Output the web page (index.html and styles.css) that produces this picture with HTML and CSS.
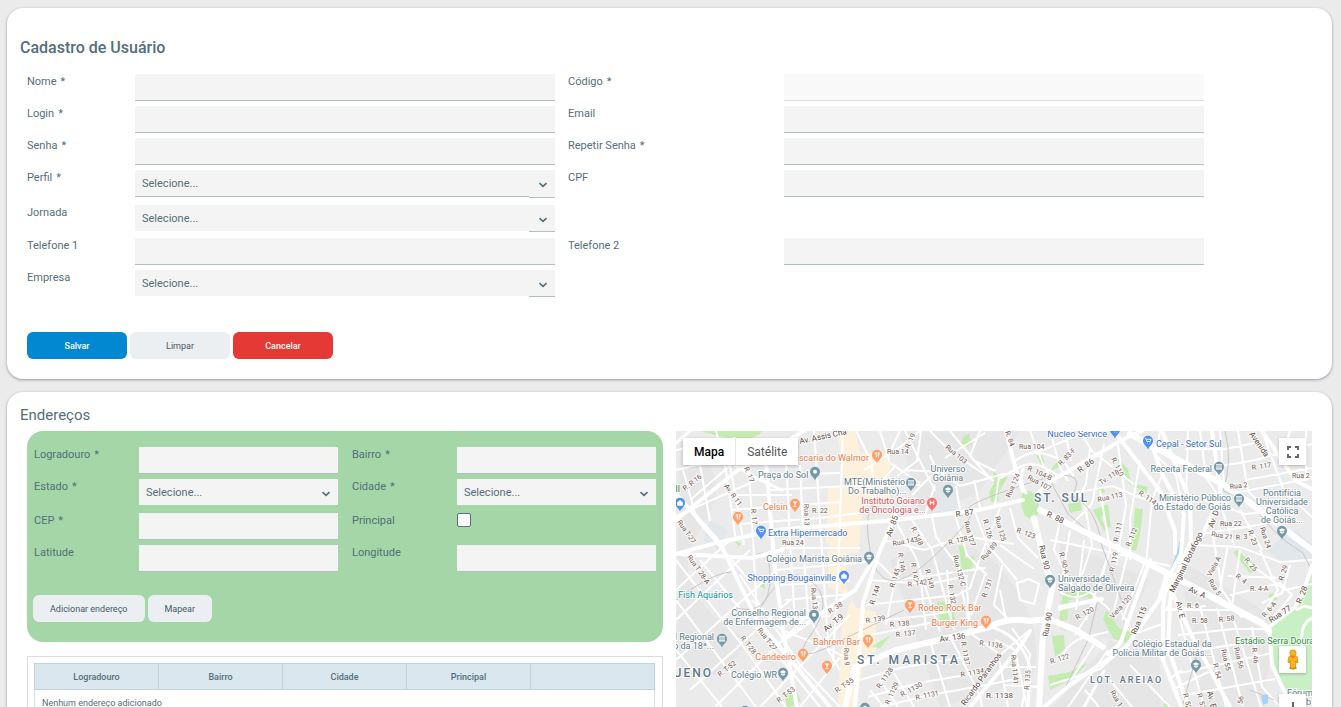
FILE: index.html
```html
<!DOCTYPE html>
<html lang="pt-BR">
<head>
<meta charset="utf-8">
<title>Cadastro de Usuário</title>
<link rel="stylesheet" href="styles.css">
</head>
<body>
<svg class="defs" aria-hidden="true">
  <symbol id="chevron" viewBox="0 0 10 6"><path d="M1.5 1.2L5 4.4L8.5 1.2" fill="none" stroke="#546e7a" stroke-width="1.6"/></symbol>
</svg>
<main class="page">
  <form class="card user-card">
    <h1 class="title">Cadastro de Usuário</h1>
    <div class="user-grid">
      <label class="first" for="nome">Nome<span class="req">*</span></label><input class="field main" id="nome" type="text">
      <label class="second" for="codigo">Código<span class="req">*</span></label><input class="field side" id="codigo" type="text" disabled>
      <label class="first" for="login">Login<span class="req">*</span></label><input class="field main" id="login" type="text">
      <label class="second" for="email">Email</label><input class="field side" id="email" type="text">
      <label class="first" for="senha">Senha<span class="req">*</span></label><input class="field main" id="senha" type="password">
      <label class="second" for="senha2">Repetir Senha<span class="req">*</span></label><input class="field side" id="senha2" type="password">
      <label class="first" for="perfil">Perfil<span class="req">*</span></label>
      <div class="picker main lined"><select id="perfil"><option>Selecione...</option></select><span class="arrow"><svg><use href="#chevron"/></svg></span></div>
      <label class="second" for="cpf">CPF</label><input class="field side" id="cpf" type="text">
      <label class="first" for="jornada">Jornada</label>
      <div class="picker main"><select id="jornada"><option>Selecione...</option></select><span class="arrow"><svg><use href="#chevron"/></svg></span></div>
      <label class="first" for="tel1">Telefone 1</label><input class="field main" id="tel1" type="text">
      <label class="second" for="tel2">Telefone 2</label><input class="field side" id="tel2" type="text">
      <label class="first" for="empresa">Empresa</label>
      <div class="picker main"><select id="empresa"><option>Selecione...</option></select><span class="arrow"><svg><use href="#chevron"/></svg></span></div>
    </div>
    <div class="actions">
      <button class="btn wide primary" type="button">Salvar</button>
      <button class="btn wide" type="button">Limpar</button>
      <button class="btn wide danger" type="button">Cancelar</button>
    </div>
  </form>

  <section class="card address-card">
    <h2 class="subtitle">Endereços</h2>
    <div class="columns">
      <div class="left">
        <form class="address-panel">
          <div class="address-grid">
            <label class="first" for="logradouro">Logradouro<span class="req">*</span></label><input class="field" id="logradouro" type="text">
            <label class="second" for="bairro">Bairro<span class="req">*</span></label><input class="field" id="bairro" type="text">
            <label class="first" for="estado">Estado<span class="req">*</span></label>
            <div class="picker"><select id="estado"><option>Selecione...</option></select><span class="arrow"><svg><use href="#chevron"/></svg></span></div>
            <label class="second" for="cidade">Cidade<span class="req">*</span></label>
            <div class="picker"><select id="cidade"><option>Selecione...</option></select><span class="arrow"><svg><use href="#chevron"/></svg></span></div>
            <label class="first" for="cep">CEP<span class="req">*</span></label><input class="field" id="cep" type="text">
            <label class="second" for="principal">Principal</label><input class="check" id="principal" type="checkbox">
            <label class="first" for="latitude">Latitude</label><input class="field" id="latitude" type="text">
            <label class="second" for="longitude">Longitude</label><input class="field" id="longitude" type="text">
          </div>
          <div class="actions address-actions">
            <button class="btn" type="button">Adicionar endereço</button>
            <button class="btn" type="button">Mapear</button>
          </div>
        </form>
        <div class="table-box">
          <table>
            <thead><tr><th>Logradouro</th><th>Bairro</th><th>Cidade</th><th>Principal</th><th></th></tr></thead>
            <tbody><tr><td colspan="5">Nenhum endereço adicionado</td></tr></tbody>
          </table>
        </div>
      </div>

      <div class="map">
        <svg class="map-canvas" viewBox="676 431 636 300" preserveAspectRatio="xMinYMin slice" role="img" aria-label="Mapa de Goiânia">
          <defs>
            <symbol id="pin" viewBox="0 0 12 15" overflow="visible"><path d="M6 14.5C5.4 11.500 1 9.800 1 5.700A5 5 0 0 1 11 5.700C11 9.800 6.600 11.500 6 14.500Z"/></symbol>
            <symbol id="fork" viewBox="0 0 12 15"><path d="M4.200 3v2.500M5.300 3v5.500M7.300 8.500V3.200M8 3.200v2.600" stroke="#fff" stroke-width=".9"/></symbol>
            <symbol id="glass" viewBox="0 0 12 15"><path d="M3.500 3.500h5L6.400 6v2h1.400v.8H4.200V8h1.400V6Z" fill="#fff"/></symbol>
            <symbol id="cart" viewBox="0 0 12 15"><path d="M3 3.500h1l1 3h3.200l.8-2.200H5M5.200 8.200h.6M7.600 8.200h.6" fill="none" stroke="#fff" stroke-width=".9"/></symbol>
            <symbol id="cap" viewBox="0 0 12 15"><path d="M2.600 5L6 3.200L9.400 5L6 6.800ZM4 6.300L6 7.400L8 6.300V7.700L6 8.700L4 7.700Z" fill="#fff"/></symbol>
            <symbol id="civic" viewBox="0 0 12 15"><path d="M3 3.200h6v1.200H3ZM3.500 5h1v2.500h-1ZM5.500 5h1v2.500h-1ZM7.500 5h1v2.500h-1ZM3 7.500h6v1H3Z" fill="#fff"/></symbol>
            <symbol id="dot" viewBox="0 0 12 15"><circle cx="6" cy="5.700" r="2" fill="#fff"/></symbol>
            <symbol id="bag" viewBox="0 0 12 15"><path d="M3.500 5h5v3.500h-5ZM4.700 5a1.300 1.500 0 0 1 2.600 0" fill="#fff" stroke="#fff" stroke-width=".6"/></symbol>
          </defs>
          <path class="land" d="M676 431h636v300H676Z"/>
          <g class="shade">
            <path d="M680 440q60 30 20 90t50 110q-40 60-74 20ZM900 431l120 0-40 60-60 30ZM890 560q80-40 120 20t20 100l-90 27ZM1060 540l90 40-30 60-60-10ZM1180 560l100 60-20 87h-60ZM1110 640l50 20v50h-110Z"/>
          </g>
          <g class="commercial">
            <path d="M837 431h18l5 22h30v50h-26l-6 50h-20l-12-10 2-56h18Z"/>
            <path d="M828 550h18v38l10 20 20 4v40l-12 6-8 49h-18l4-80 10-30-24-10Z"/>
          </g>
          <g class="campus"><path d="M941 492l18 8-4 14h-18ZM1266 548l30-18 16 14v14l-32 4ZM710 520l18 10-10 20-14-10Z"/></g>
          <g class="green">
            <path d="M701 431h62q-6 7-20 8t-42-8ZM964 436l5-2 3 10-6 3-6-2ZM993 470l8 9 7-3-10 18 1 7-8 1-2-10 5-8ZM1036 455h6l3 8-4 2ZM1049 472l9-12 1 7ZM1068 504l12-3 2 9-12 3ZM1098 488l5-1 2 5-5 2ZM1093 510l15-6 3 24-5-2-1-12-4 4 6 12-3 1ZM1118 459l10 10 3 14 17 4-2 6-18-10-10-22ZM1135 508l8 1-3 26-4 16-6-2 3-14ZM1233 552l4-2 16 13 2 8-5 2ZM1252 441l4 2-2 3ZM959 545l6 1v12l10-2-4 14-9 3ZM937 602h14l4 17-15 3ZM1063 594l10-5 20 4 6 12-12-8-18 3-2 20-8 1ZM1107 610l12 18 15 5-5 11-15-5-11-20ZM1052 636l12-1 1 14-10 8ZM1048 676l22-4 18-10-14 16-24 12ZM785 696l10-7 6 12-14 8ZM871 647l20-12-11 13ZM735 541l6 2-2 4ZM762 580l3-1v10l-5-3ZM1268 595l6-2 4 6-7 2ZM1164 697l5 10h-5Z"/>
            <path d="M1023 493q9-6 14 6t-2 19q-11 2-13-10t1-15Z"/>
            <path class="park" d="M1312 574l-9 12-5 18-29 20-1 12 6 31 10 22 28 9Z"/>
          </g>
          <g class="water"><path d="M1184 511q0 22-5 39t-12 29"/><path class="pond" d="M1261 696l7-3v10l-5 2Z"/></g>
          <g class="minor">
            <path d="M676 450l60-12M676 470l120-30M690 500l70-60M676 516l90-40M683 470l14 50 52 60M700 465l10 56M716 431l10 40 10 70M730 465l14 80M749 465l8 150M785 440l6 120 4 60M800 465l4 90 4 60M814 431l4 60 6 90 4 60M843 431l-2 60-2 60-6 110M732 495h60M730 510l110-8M740 524l80-6 80-10M765 475l75-2M770 490l80-4 70-1M780 548h80M776 570l90-8M780 585l70-4M785 600l65-6M782 620l48-4"/>
            <path d="M676 560l70 90 40 57M676 600l80 107M676 650l46 57M676 620l74-70M676 660l100-90M690 690l100-90M715 707l105-104M760 707l90-92M800 707l40-50M700 560l90 110 30 37M730 540l-54 50M740 575l60 90 40 42M752 600l30 30 50 20 20 12M810 620l30 50"/>
            <path d="M856 431l15 30 4 30M880 431l10 32 30 20M900 431l-12 25M864 470l36-23 20-16M870 495l26-30M905 431l30 60M921 431l-4 30-20 15M930 455q6 20 30 26M930 431l20 20 44 30M950 431l25 30 20 10M945 458l40-25M980 431l-10 25 20 22M905 470l35 2 20 14 44-12 20 0M912 495l20-20M925 515l10-30M960 510l-4-24M980 508l-6-28M995 505l4-28M1000 478l22-12"/>
            <path d="M1014 470q20-14 44 6M1014 462q20-18 50 0l10 14M1024 455l22-6 40-18M1030 431l14 36 12 16M1050 431l10 36 8 14M1065 431l6 30M1080 431l12 20 26 20 16 14M1090 448l-4 36-8 14M1104 444l-12 60-20 20M1060 495l52-9 24 10 30 10M1118 445l8 60-10 60M1140 460l-10 60 0 40M1084 500l8 45-10 30M1100 490l10 60-12 40M1060 520l-6 30 20 40M1070 530l-8 50M1084 540l-8 70M1152 500l-6 64M1164 470l-12 30M1050 540l50 10 70 16M1110 550l-24 70M1128 552l-15 62M1146 560l-24 60"/>
            <path d="M876 560l20 20 90-12M884 540l40 10 40-14 50 8M896 522l20 36 24 74M912 520l20 30 22 80M932 517l4 20 30 40 4 50M955 515l12 40 20 20M975 512l12 32 30 36M1000 508l-20 50-10 30-18 10M1000 545l34 24M1010 508l8 30 20 20M866 605l90-10M862 622l60-6 50-8M870 635l60-12M868 580l60 4 40-8M900 555l-14 70M920 570l6 60M947 570l4 50M962 590l8 38M985 575l-14 40M1002 565l-8 40 16 16M1017 583l12-4 10 5-5 20-14-4ZM1000 590l6 30"/>
            <path d="M860 680l40-12 70-12M868 697l50-14 60-10M880 707l50-12 56-10 30-6M930 641l20 66M950 636l30 60 2 11M970 633l28 20 10 54M995 640l20 10 12 57M985 690l-15 17M1000 667h36M1004 685l38 2M1000 655l30-25M1012 628l18 26-8 53M870 690l14 17M880 680l18 27M894 673l20 34"/>
            <path d="M1060 592q16 10 30 0l20 18M1058 610l40-10M1060 660q8-20 30-24l18-4M1050 685l50-16 20-18M1075 635l24-38M1108 650l-40 57M1120 610l14 24 28-10M1110 680l22 27M1085 690l14 17M1130 665l40 42M1140 640l24 20M1097 640l-26 40"/>
            <path d="M1160 431l-4 24 20 20 8 40M1188 431l-2 70M1200 431l6 46 14 22M1220 431l4 55M1238 431l10 60 20 20M1185 449h40l30-6M1196 470l60-10 56-16M1230 494l82-16M1245 480l67-12M1262 431l22 60 28 26M1290 431l-10 34M1306 431v50M1205 500l40 14 40-4M1200 534l40-6 52-9M1196 545l44 2 40 15 32-2M1220 503l14 42M1240 510l22 40M1228 545l-10 54M1212 530l10 60 20 28M1240 550l-8 56M1245 560l40 30 27-6M1260 550l18 40-14 22M1230 595l50-12 12 12-20 24M1228 576l60 2M1290 565l-8 28-20 10"/>
            <path d="M1172 610h60l34 18M1178 635l55-6 35 0M1166 655l92-14M1180 673l92-20M1185 695l90-16M1180 620l24 87M1200 606l26 101M1217 608l26 99M1233 618l28 89M1252 627l10 60 18 20M1168 680l14-10M1172 690l40-20M1176 590l-10 20 40-4"/>
          </g>
          <path class="park-road" d="M1312 618q-12 6-10 24l2 30M1296 610l8-4 8 2"/>
          <g class="rail"><path d="M890 500q-30-6-20 50t60 10 40-50 56-26 46 12q24 10 30 50l20 56M1225 431q8 30-2 60l30 12q16 30 50 50l8 16M676 600q40-30 60-28M754 620q30-60 56-40t0 56 40 0l54-26M750 560q20-20 20 18t-34 30M1064 690l24-50 10-40M1198 650l-16 57M1250 690l24 10M1050 480l18 34 30 26"/></g>
          <g class="major">
            <path class="w4" d="M676 494l44 49 37 77 73 87M676 520l62-50 66-39M716 543l60-13 120-10 83-10 44-10M766 463l9 107 8 60 14 77M676 554l40-11M680 554l72 4 30-8M896 513l-17 40-16 50-8 104M783 640l72-50 18-30"/>
            <path class="w4" d="M1006 431l9 36 8 24M1038 494l8-10 76-44 20-9M1114 431l46 60 15 40 0 22M1212 431l9 64-21 45-41 60-33 47-56 38-26 22M1060 607l42-8M1262 431l34 50 16 8"/>
            <path class="w5" d="M845 707l10-40 41-17 48-11 45-12q20-10 40-6l20-2 27 11 27 17M1034 518l12 50 7 16-10 50-4 73M1040 510l76 37 51 26 95 50 7 8M1130 434l91 49 29 20 66 50"/>
            <path class="w4" d="M1150 440l12 34 22 40-3 40-14 26-4 28v52l20 51M1162 431l28 70 1 40-20 46-3 60 20 60M1150 560l-30 84-12 10M1172 592l18 40 40 75M1167 573l-8 27M1312 566l-10 30-7 11-26 20 3 38 14 30M970 707l50-60 10-16M1262 623l-38-18-57-32"/>
            <path class="w3" d="M992 627q30 10 38 40l-2 40M690 431l-14 12M736 466l20 12 26 12M1026 493q-7-10-3-24M1084 707l20-36"/>
          </g>
          <g class="street">
            <text transform="translate(685 491) rotate(-38)">R. R 16</text><text transform="translate(724 486) rotate(55)">Av. R 11</text><text transform="translate(744 468) rotate(68)">R. 17</text><text transform="translate(751 509) rotate(85)">R. 17</text><text transform="translate(804 504) rotate(88)">Rua 13</text><text x="812" y="513">R. 22</text><text x="782" y="545">Rua 24</text>
            <text transform="translate(677 522) rotate(55)">Rua T-27</text><text transform="translate(687 557) rotate(55)">Rua T 28-A</text><text class="dark" transform="translate(800 444) rotate(-12)">Av. Assis Cha</text><text transform="translate(887 454)">Rua 14</text><text transform="translate(909 449) rotate(-65)">R. 19</text><text transform="translate(945 448) rotate(40)">Rua 103</text><text transform="translate(1005 432) rotate(70)">R. 84</text><text x="1019" y="449">Rua 104</text>
            <text transform="translate(1027 470) rotate(24)">R. 104-B</text><text transform="translate(1027 479) rotate(28)">Rua 107</text><text transform="translate(1061 466) rotate(-45)">R. 83-F</text><text class="dark" transform="translate(1080 473) rotate(-36)">R. 86</text><text transform="translate(1111 459) rotate(64)">R. 110</text><text transform="translate(1101 485) rotate(-32)">Tv. 118</text><text transform="translate(1010 498) rotate(-66)">Rua 124</text><text transform="translate(1098 502) rotate(-12)">Rua 113</text><text transform="translate(1138 494) rotate(35)">R. 114</text>
            <text class="dark" transform="translate(956 517) rotate(-8)">R. 87</text><text class="dark" transform="translate(1046 516) rotate(25)">R. 88</text><text class="dark" transform="translate(891 537) rotate(-70)">Av. 85</text><text transform="translate(911 528) rotate(66)">R. 148</text><text transform="translate(893 546) rotate(-10)">Rua 143</text><text transform="translate(964 522) rotate(74)">Rua 127</text><text transform="translate(983 520) rotate(75)">R. 126</text><text transform="translate(995 517) rotate(75)">Rua 125</text><text transform="translate(1016 532) rotate(20)">R. 123</text><text transform="translate(949 545) rotate(-14)">R. 128</text><text transform="translate(984 561) rotate(-50)">Rua 89</text>
            <text transform="translate(898 553) rotate(82)">R. 146</text><text transform="translate(911 563) rotate(82)">R. 147</text><text transform="translate(925 570) rotate(76)">R. 149</text><text transform="translate(894 588) rotate(-72)">R. 145</text><text transform="translate(874 605) rotate(-72)">R. 144</text><text transform="translate(908 587) rotate(-8)">R. 142</text><text transform="translate(953 556) rotate(75)">Rua 132-C</text><text transform="translate(948 585) rotate(80)">R. 132</text><text transform="translate(986 598) rotate(-70)">R. 131</text><text class="dark" transform="translate(1039 546) rotate(77)">Rua 90</text><text transform="translate(1059 553) rotate(75)">R. 90-A</text><text transform="translate(1118 542) rotate(-78)">R. 111</text><text transform="translate(1130 547) rotate(-68)">R. 112</text><text transform="translate(1114 572) rotate(-78)">R. 119</text>
            <text transform="translate(811 588) rotate(85)">Rua 13</text><text transform="translate(830 614) rotate(-33)">R. 38</text><text class="dark" transform="translate(826 632) rotate(-38)">Av. T-9</text><text transform="translate(757 630) rotate(52)">Rua T-27</text><text transform="translate(740 638) rotate(52)">R. T-28</text><text transform="translate(720 677) rotate(-38)">R. T-52</text><text transform="translate(779 703) rotate(-38)">R. T-53</text><text transform="translate(837 693) rotate(-34)">R. T-55</text><text transform="translate(844 648) rotate(88)">Rua 9</text><text transform="translate(866 623) rotate(-8)">R. 139</text><text transform="translate(890 627) rotate(-5)">R. 138</text><text transform="translate(896 637) rotate(-6)">R. 137</text>
            <text class="dark" transform="translate(940 642) rotate(-8)">Av. 136</text><text transform="translate(979 645) rotate(8)">R. 1136</text><text transform="translate(961 642) rotate(80)">R. 1137</text><text transform="translate(961 677) rotate(-10)">R. 1134</text><text transform="translate(880 689) rotate(-55)">R. 1128</text><text transform="translate(889 705) rotate(-65)">R. 1129</text><text transform="translate(902 697) rotate(-28)">R. 1130</text><text transform="translate(916 700) rotate(-12)">R. 1131</text><text class="dark" x="986" y="698">R. 1138</text><text class="dark" transform="translate(965 706) rotate(-54)">Ricardo Paranhos</text><text transform="translate(1011 655) rotate(85)">Rua 1141</text><text transform="translate(1029 690) rotate(-85)">R. 135</text>
            <text class="dark" transform="translate(1048 637) rotate(-80)">Rua 90</text><text transform="translate(1077 620) rotate(-28)">R. 120</text><text transform="translate(1113 619) rotate(-48)">Viela 120</text><text class="dark" transform="translate(1136 635) rotate(-68)">Rua 115</text><text transform="translate(1051 664) rotate(-18)">R. 122</text>
            <text class="dark" transform="translate(1249 434) rotate(56)">Avenida</text><text transform="translate(1252 470) rotate(-8)">R. 117</text><text x="1292" y="478">Rua 2</text><text transform="translate(1230 489) rotate(-6)">Rua 2</text><text class="dark" transform="translate(1213 528) rotate(-70)">Av. D</text><text x="1220" y="526">Rua 22</text><text transform="translate(1211 536) rotate(10)">Rua 21</text><text transform="translate(1236 540) rotate(-6)">R. 3</text><text transform="translate(1248 531) rotate(72)">R. 23</text><text transform="translate(1260 528) rotate(72)">Rua 24</text><text class="dark" transform="translate(1174 593) rotate(-64)">Marginal Botafogo</text><text transform="translate(1211 577) rotate(-62)">Viela A</text><text transform="translate(1208 581) rotate(58)">Rua 5</text><text class="dark" transform="translate(1188 591) rotate(25)">Av. A</text><text transform="translate(1244 560) rotate(50)">R. 25</text><text transform="translate(1235 577) rotate(38)">R. 4</text><text x="1250" y="591">R. 4-A</text><text transform="translate(1283 581) rotate(-72)">R. 29</text><text class="dark" transform="translate(1301 604) rotate(-68)">R. 28</text>
            <text class="dark" transform="translate(1176 602) rotate(77)">Av. E</text><text x="1187" y="608">R. 6</text><text x="1192" y="623">R. 58</text><text transform="translate(1219 622) rotate(-6)">R. 58</text><text transform="translate(1265 618) rotate(-50)">R. 6-A</text><text class="dark" transform="translate(1271 623) rotate(-33)">Rua 77</text><text transform="translate(1221 650) rotate(76)">Rua 55</text><text transform="translate(1234 648) rotate(76)">Rua 56</text><text transform="translate(1252 648) rotate(84)">R. 46</text><text transform="translate(1213 664) rotate(76)">R. 54</text><text transform="translate(1183 694) rotate(76)">R. 52</text><text transform="translate(1197 694) rotate(76)">R. 57</text><text class="dark" transform="translate(1207 692) rotate(76)">Av. E</text><text transform="translate(1241 712) rotate(-80)">R. 56</text><text transform="translate(1110 692) rotate(60)">Rua 1</text>
          </g>
          <g class="district"><text x="1034" y="502">ST. SUL</text><text class="wide-name" x="857" y="664">ST. MARISTA</text><text x="664" y="677">BUENO</text><text class="small" x="1090" y="683">LOT. AREIAO</text></g>
          <g class="poi slate">
            <text x="758" y="478">Praça do Sol</text><text x="844" y="485">MTE(Ministério</text><text x="848" y="494">Do Trabalho)...</text><text class="mid" x="948" y="472">Universo</text><text class="mid" x="948" y="481">Goiânia</text><text class="end" x="862" y="562">Colégio Marista Goiânia</text><text class="end" x="806" y="616">Conselho Regional</text><text class="end" x="806" y="625">de Enfermagem de...</text><text class="end" x="714" y="640">al Regional</text><text class="end" x="714" y="649">ho da 18ª...</text><text x="731" y="678">Colégio WR</text><text x="1058" y="582">Universidade</text><text x="1058" y="591">Salgado de Oliveira</text><text class="end" x="1212" y="472">Receita Federal</text><text class="end" x="1231" y="501">Ministério Público</text><text class="end" x="1231" y="510">do Estado de Goiás</text><text class="mid" x="1282" y="496">Pontifícia</text><text class="mid" x="1282" y="505">Universidade</text><text class="mid" x="1282" y="514">Católica</text><text class="mid" x="1282" y="523">de Goiás...</text><text class="mid" x="1172" y="647">Colégio Estadual da</text><text class="mid" x="1162" y="656">Polícia Militar de Goiás...</text><text x="1287" y="696">Fórum</text><text x="1306" y="705">b</text>
          </g>
          <g class="poi blue"><text class="end" x="1107" y="437">Nucleo Service</text><text x="1156" y="447">Cepal - Setor Sul</text><text x="768" y="536">Extra Hipermercado</text><text class="end" x="836" y="581">Shopping Bougainville</text></g>
          <g class="poi orange"><text class="end" x="869" y="461">ascaria do Walmor</text><text x="763" y="510">Celsin</text><text class="end" x="860" y="645">Bahrem Bar</text><text class="end" x="796" y="660">Candeeiro</text><text x="918" y="611">Rodeo Rock Bar</text><text class="end" x="978" y="626">Burger King</text></g>
          <g class="poi red"><text class="end" x="925" y="504">Instituto Goiano</text><text class="end" x="926" y="513">de Oncologia e...</text></g>
          <g class="poi teal"><text class="end" x="733" y="598">l Fish Aquários</text></g>
          <g class="poi forest"><text x="1235" y="644">Estádio Serra Dourada</text><text class="end" x="680" y="492">ll</text></g>
          <g class="pins-slate">
            <g transform="translate(809 466)"><use href="#pin" width="12" height="15"/><use href="#dot" width="12" height="15"/></g>
            <g transform="translate(905 477)"><use href="#pin" width="12" height="15"/><use href="#civic" width="12" height="15"/></g>
            <g transform="translate(942 484)"><use href="#pin" width="12" height="15"/><use href="#cap" width="12" height="15"/></g>
            <g transform="translate(863 551)"><use href="#pin" width="12" height="15"/><use href="#cap" width="12" height="15"/></g>
            <g transform="translate(808 609)"><use href="#pin" width="12" height="15"/><use href="#dot" width="12" height="15"/></g>
            <g transform="translate(716 633)"><use href="#pin" width="12" height="15"/><use href="#civic" width="12" height="15"/></g>
            <g transform="translate(777 667)"><use href="#pin" width="12" height="15"/><use href="#cap" width="12" height="15"/></g>
            <g transform="translate(1044 574)"><use href="#pin" width="12" height="15"/><use href="#cap" width="12" height="15"/></g>
            <g transform="translate(1213 461)"><use href="#pin" width="12" height="15"/><use href="#civic" width="12" height="15"/></g>
            <g transform="translate(1233 493)"><use href="#pin" width="12" height="15"/><use href="#civic" width="12" height="15"/></g>
            <g transform="translate(1276 525)"><use href="#pin" width="12" height="15"/><use href="#cap" width="12" height="15"/></g>
            <g transform="translate(1190 659)"><use href="#pin" width="12" height="15"/><use href="#cap" width="12" height="15"/></g>
            <g transform="translate(859 702)"><use href="#pin" width="12" height="15"/><use href="#dot" width="12" height="15"/></g>
            <g transform="translate(739 705)"><use href="#pin" width="12" height="15"/></g>
          </g>
          <g class="pins-blue">
            <g transform="translate(1109 424)"><use href="#pin" width="12" height="15"/><use href="#cart" width="12" height="15"/></g>
            <g transform="translate(1142 435)"><use href="#pin" width="12" height="15"/><use href="#cart" width="12" height="15"/></g>
            <g transform="translate(755 525)"><use href="#pin" width="12" height="15"/><use href="#cart" width="12" height="15"/></g>
            <g transform="translate(838 570)"><use href="#pin" width="12" height="15"/><use href="#bag" width="12" height="15"/></g>
            <g transform="translate(674 497)"><use href="#pin" width="12" height="15"/><use href="#bag" width="12" height="15"/></g>
          </g>
          <g class="pins-orange">
            <g transform="translate(871 449)"><use href="#pin" width="12" height="15"/><use href="#fork" width="12" height="15"/></g>
            <g transform="translate(789 498)"><use href="#pin" width="12" height="15"/><use href="#glass" width="12" height="15"/></g>
            <g transform="translate(732 511)"><use href="#pin" width="12" height="15"/><use href="#fork" width="12" height="15"/></g>
            <g transform="translate(862 634)"><use href="#pin" width="12" height="15"/><use href="#fork" width="12" height="15"/></g>
            <g transform="translate(797 648)"><use href="#pin" width="12" height="15"/><use href="#fork" width="12" height="15"/></g>
            <g transform="translate(821 660)"><use href="#pin" width="12" height="15"/><use href="#glass" width="12" height="15"/></g>
            <g transform="translate(904 599)"><use href="#pin" width="12" height="15"/><use href="#glass" width="12" height="15"/></g>
            <g transform="translate(980 615)"><use href="#pin" width="12" height="15"/><use href="#fork" width="12" height="15"/></g>
          </g>
          <g class="pins-red" transform="translate(926 497)"><use href="#pin" width="12" height="15"/><path d="M4.300 3.500v4.500M7.700 3.500v4.500M4.300 5.700h3.400" stroke="#fff" stroke-width="1.200"/></g>
        </svg>
        <div class="map-types"><button class="active" type="button">Mapa</button><button type="button">Satélite</button></div>
        <button class="map-tool fullscreen" type="button" aria-label="Tela cheia"><svg viewBox="0 0 12 12"><path d="M1 4V1H4M8 1H11V4M11 8V11H8M4 11H1V8" fill="none" stroke="#666" stroke-width="2"/></svg></button>
        <button class="map-tool pegman" type="button" aria-label="Street View"><svg viewBox="0 0 14 22"><ellipse cx="7" cy="20" rx="4" ry="1.500" fill="#c88b20"/><path d="M2.500 8.500Q3 7.200 5 7.200H9Q11 7.200 11.500 8.500L12.300 14L10.500 14.500L10 12L9.500 20H4.500L4 12L3.500 14.500L1.700 14Z" fill="#fbb41a" stroke="#cf8b15" stroke-width=".8"/><circle cx="7" cy="4.300" r="3.300" fill="#fbb41a" stroke="#cf8b15" stroke-width=".8"/><path d="M4.800 7.500L7 10.300L9.200 7.500Z" fill="#e8722a"/></svg></button>
        <button class="map-tool zoom-in" type="button" aria-label="Aproximar"><svg viewBox="0 0 12 12"><path d="M6 0V12M0 6H12" stroke="#666" stroke-width="2"/></svg></button>
      </div>
    </div>
  </section>
</main>
</body>
</html>
```
FILE: styles.css
```css
* { box-sizing: border-box; }
body {
  margin: 0;
  height: 100vh;
  overflow-y: auto;
  scrollbar-width: none;
  background: #ebebeb;
  color: #546e7a;
  font: 11px/14px Roboto, "Liberation Sans", sans-serif;
}
.defs { display: none; }
.page { display: flex; flex-direction: column; gap: 13px; padding: 8px 9px 8px 7px; }
.card {
  background: #fff;
  border-radius: 16px;
  padding: 0 20px 20px 20px;
  box-shadow: 0 1px 3px rgba(70, 70, 100, .5);
}
.title { margin: 0 0 0 -7px; padding-top: 30px; font-size: 16px; line-height: 20px; font-weight: 500; }
.subtitle { margin: 0 0 0 -7px; padding-top: 13px; font-size: 15px; line-height: 20px; font-weight: 400; }

.user-grid {
  display: grid;
  grid-template-columns: 108fr 420fr 13fr 216fr 420fr 108fr;
  grid-template-rows: repeat(3, 32px) 35px 33px 32px 33px;
  padding-top: 16px;
}
label { padding-top: 1px; }
.first { grid-column: 1; }
.second { grid-column: 4; }
.main { grid-column: 2; }
.side { grid-column: 5; }
.req { margin-left: 4px; }

.field {
  width: 100%;
  min-width: 0;
  height: 27px;
  padding: 4px 7px;
  border: 0;
  border-bottom: 1px solid #b0bec5;
  border-radius: 0;
  background: #f4f4f4;
  color: inherit;
  font: inherit;
}
.field:disabled { opacity: .5; }
.picker { display: grid; align-self: start; grid-template-columns: 1fr 26px; }
.picker select {
  grid-area: 1 / 1 / 2 / 3;
  width: 100%;
  height: 26px;
  padding: 2px 7px 0;
  appearance: none;
  border: 0;
  border-radius: 0;
  background: #f4f4f4;
  color: inherit;
  font: inherit;
}
.picker.lined select { height: 27px; border-bottom: 1px solid #b0bec5; }
.picker .arrow {
  grid-area: 1 / 2;
  display: flex;
  align-items: center;
  justify-content: center;
  height: 27px;
  padding: 3px 0 0 2px;
  border-bottom: 1px solid #b0bec5;
  background: #f4f4f4;
  pointer-events: none;
  z-index: 1;
}
.picker.lined .arrow { height: 28px; }
.arrow svg { width: 10px; height: 6px; }

.actions { display: flex; gap: 3px; }
.user-card .actions { padding-top: 29px; }
.btn {
  height: 27px;
  padding: 0 17px;
  border: 0;
  border-radius: 6px;
  background: #eceff1;
  color: #455a64;
  font: 9px/14px Roboto, "Liberation Sans", sans-serif;
}
.wide { width: 100px; }
.primary { background: #0288d1; color: #fff; font-weight: 500; }
.danger { background: #e53935; color: #fff; font-weight: 500; }

.columns { display: grid; grid-template-columns: 1fr 1fr; gap: 13px; padding-top: 6px; }
.left { display: flex; flex-direction: column; gap: 14px; min-width: 0; }
.address-panel { padding: 16px 7px 20px; border-radius: 16px; background: #a5d6a7; }
.address-grid {
  display: grid;
  grid-template-columns: 105fr 199fr 14fr 105fr 199fr;
  grid-template-rows: 32px 34px 32px 32px;
}
.address-grid .arrow { border: 0; height: 26px; }
.address-grid .check {
  width: 14px;
  height: 14px;
  margin: 0;
  appearance: none;
  border: 1px solid #546e7a;
  border-radius: 2px;
  background: #fff;
}
.address-actions { margin-left: -1px; padding-top: 18px; }
.table-box { padding: 6px 7px 6px 6px; border: 1px solid #ddd; }
table { width: 100%; border-collapse: collapse; table-layout: fixed; font-size: 9px; line-height: 14px; }
th { height: 26px; padding: 0; border: 1px solid #bfd3dd; background: #dae7ef; font-weight: 500; }
td { height: 27px; padding: 0 7px; border: 1px solid #d5e2e9; }

.map { position: relative; min-height: 300px; min-width: 0; overflow: hidden; }
.map-canvas { display: block; width: 100%; height: 100%; }
.land { fill: #ebebeb; }
.shade { fill: #e3e3e3; opacity: .6; }
.commercial { fill: #fdf1dc; }
.campus { fill: #e2e7ec; }
.green { fill: #c5ecb0; }
.park { fill: #c9f0c4; }
.water { fill: none; stroke: #a5d4fb; stroke-width: 3; }
.pond { fill: #a5d4fb; stroke: none; }
.minor { fill: none; stroke: #fff; stroke-width: 2; stroke-linejoin: round; }
.park-road { fill: none; stroke: #fff; stroke-width: 3; }
.rail { fill: none; stroke: #c9c6c6; stroke-width: 1; }
.major { fill: none; stroke: #fff; stroke-linejoin: round; stroke-linecap: round; }
.w3 { stroke-width: 3; }
.w4 { stroke-width: 4; }
.w5 { stroke-width: 6; }
.map-canvas text { font-family: Roboto, "Liberation Sans", sans-serif; paint-order: stroke; stroke: #fff; stroke-width: 2px; stroke-opacity: .8; }
.street text { font-size: 7px; fill: #75584f; }
.street .dark { font-size: 8px; fill: #5f4a43; }
.district text { font-size: 12px; font-weight: 500; letter-spacing: 2px; fill: #607889; }
.district .wide-name { letter-spacing: 3px; }
.district .small { font-size: 9px; }
.poi text { font-size: 9px; }
.poi .mid { text-anchor: middle; }
.poi .end { text-anchor: end; }
.slate { fill: #607d8b; }
.blue { fill: #3b70c4; }
.orange { fill: #e67c4c; }
.red { fill: #d6535c; }
.teal { fill: #16929b; }
.forest { fill: #2c8a3e; }
.pins-slate { fill: #7699a9; }
.pins-blue { fill: #4a90f5; }
.pins-orange { fill: #ff9e67; }
.pins-red { fill: #f87070; }

.map-types {
  position: absolute;
  top: 7px;
  left: 7px;
  display: flex;
  box-shadow: 0 1px 3px rgba(0, 0, 0, .25);
}
.map-types button {
  height: 27px;
  padding: 0 11px;
  border: 0;
  border-left: 1px solid #e8e8e8;
  background: #fff;
  color: #565656;
  font: 12px/16px Roboto, "Liberation Sans", sans-serif;
}
.map-types .active { border: 0; color: #000; font-weight: 500; }
.map-tool {
  position: absolute;
  right: 6px;
  display: flex;
  align-items: center;
  justify-content: center;
  width: 27px;
  height: 27px;
  padding: 0;
  border: 0;
  border-radius: 1px;
  background: #fff;
  box-shadow: 0 1px 3px rgba(0, 0, 0, .25);
}
.map-tool svg { width: 12px; height: 12px; }
.fullscreen { top: 7px; }
.pegman { top: 215px; }
.pegman svg { width: 14px; height: 21px; }
.zoom-in { top: 263px; }
```
